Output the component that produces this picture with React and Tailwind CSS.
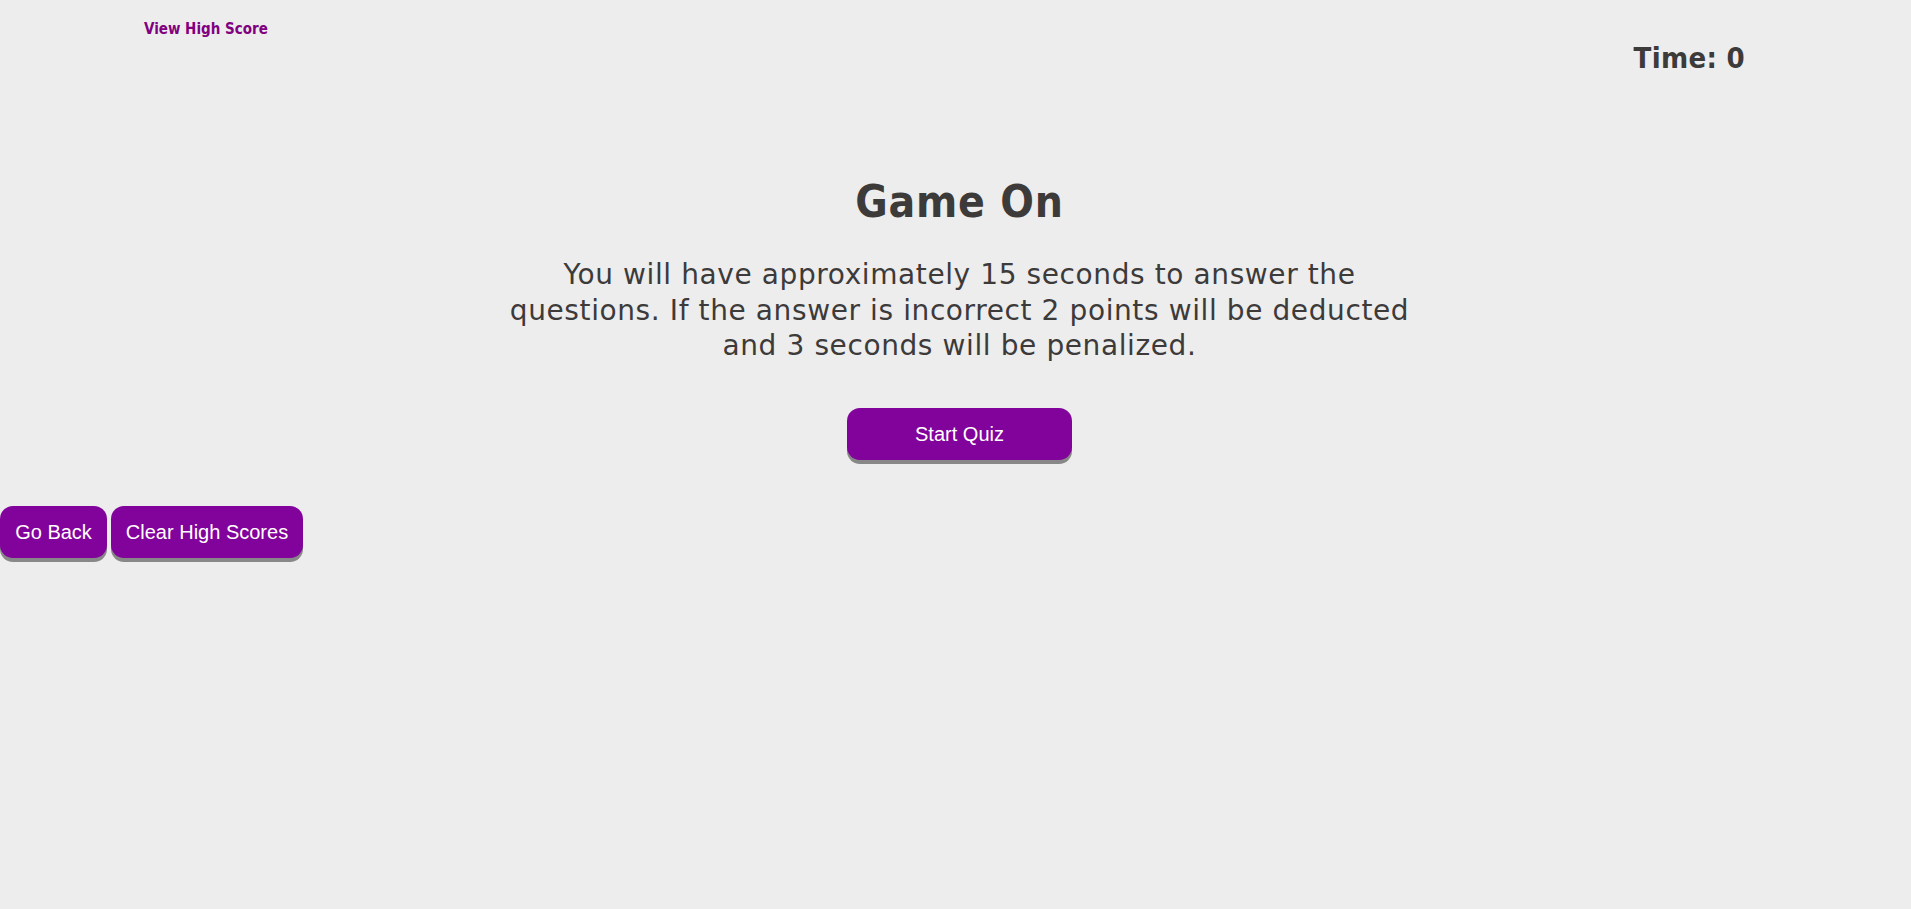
import React from "react";

export default function App() {
  return (
    <div className="min-h-screen bg-[#ededed] text-[#3d3a3a] font-['DejaVu_Sans_Condensed',sans-serif]">
      {/* header */}
      <header className="flex items-start justify-between pl-[144px] pr-[166px]">
        <a href="#" className="mt-[18px] text-[15px] font-bold text-[#800080]">
          View High Score
        </a>
        <div className="mt-[40px] text-[29px] font-bold leading-[36px] tracking-[0.3px]">Time: 0</div>
      </header>

      {/* intro */}
      <main className="flex flex-col items-center pl-[8px] text-center">
        <h1 className="mt-[100px] text-[44px] font-bold leading-[52px] tracking-[0.8px]">Game On</h1>
        <p className="mt-[29px] w-[920px] font-['DejaVu_Sans',sans-serif] text-[28px] leading-[35.5px] tracking-[0.6px]">
          You will have approximately 15 seconds to answer the questions. If the
          answer is incorrect 2 points will be deducted and 3 seconds will be
          penalized.
        </p>
        <button className="mt-[44px] h-[52px] w-[225px] rounded-[13px] bg-[#82039b] font-['Liberation_Sans',sans-serif] text-[20px] text-white shadow-[0_4px_0_#888]">
          Start Quiz
        </button>
      </main>

      {/* high score actions */}
      <div className="mt-[46px] flex gap-[4px] font-['Liberation_Sans',sans-serif] text-[20px] text-white">
        <button className="h-[52px] w-[107px] rounded-[13px] bg-[#82039b] shadow-[0_4px_0_#888]">
          Go Back
        </button>
        <button className="h-[52px] w-[192px] rounded-[13px] bg-[#82039b] shadow-[0_4px_0_#888]">
          Clear High Scores
        </button>
      </div>
    </div>
  );
}
